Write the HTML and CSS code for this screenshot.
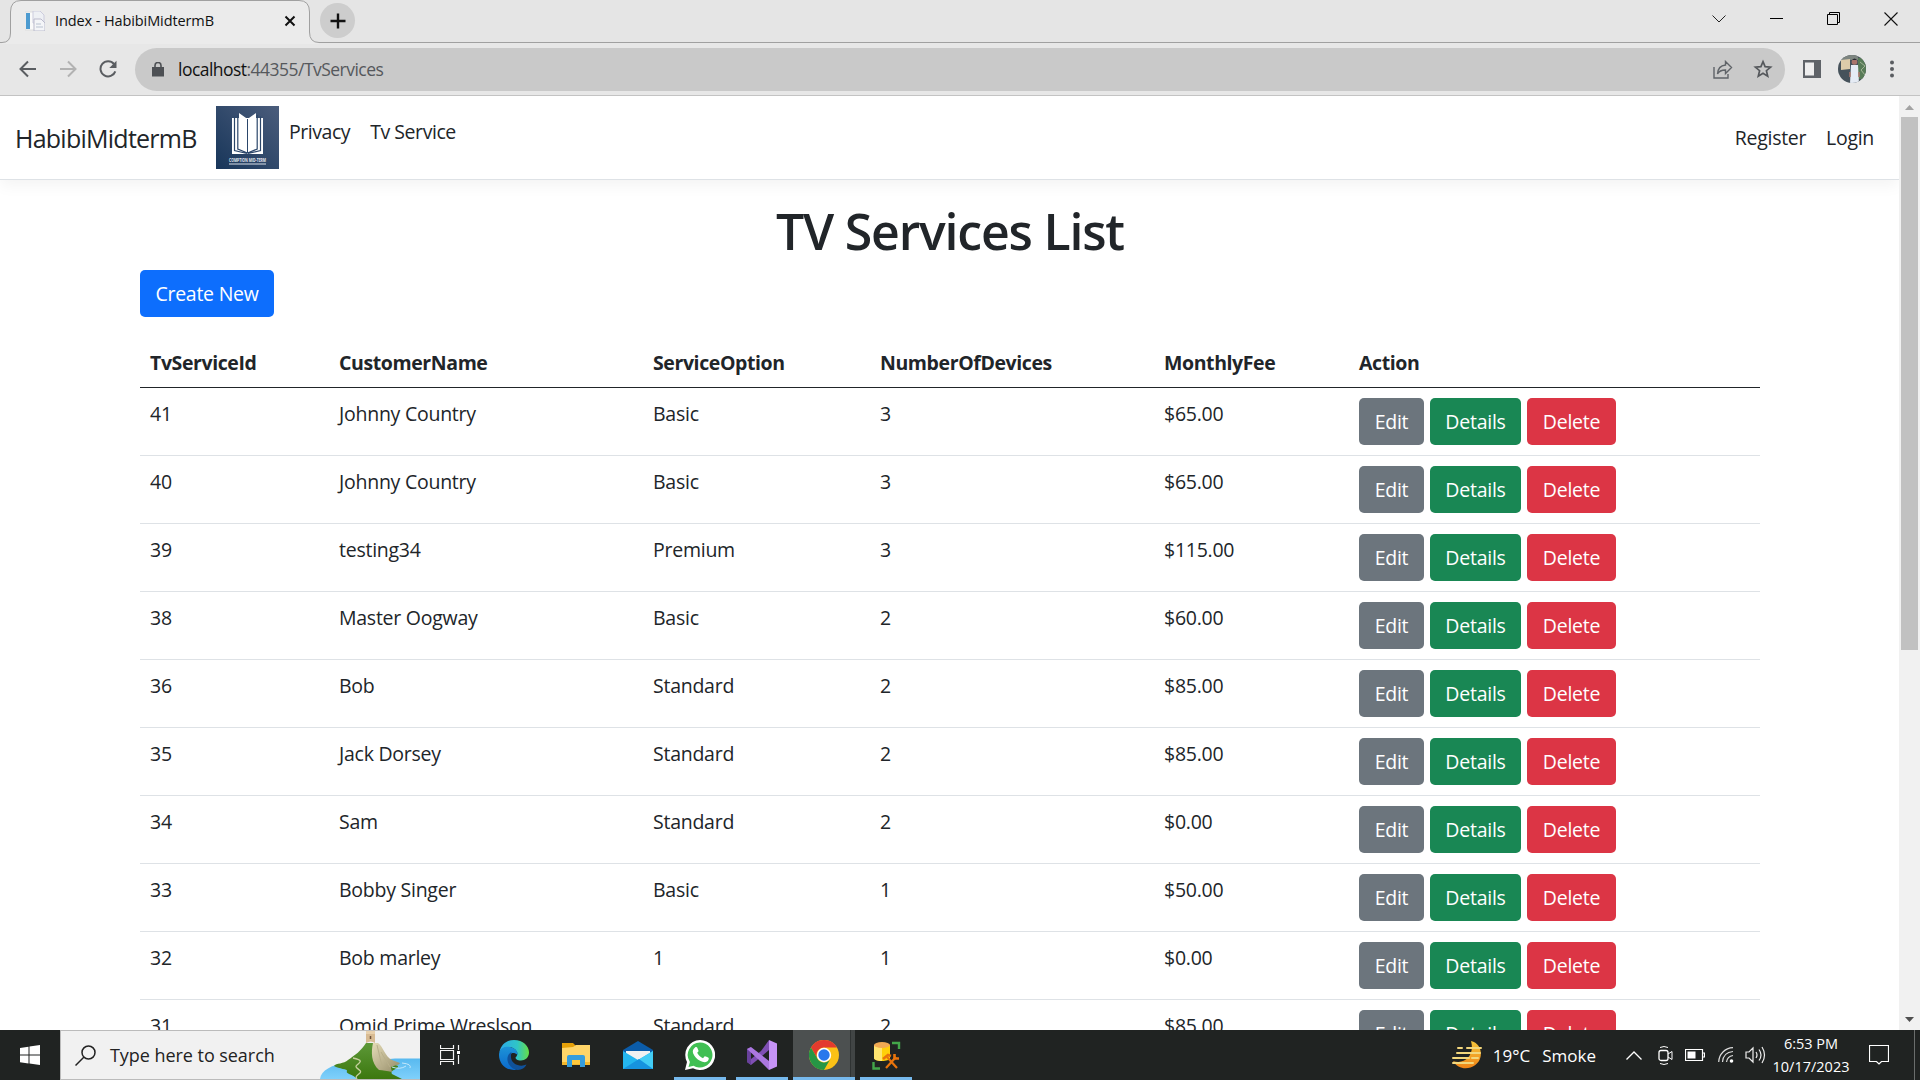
FILE: index.html
```html
<!DOCTYPE html>
<html lang="en">
<head>
<meta charset="utf-8">
<title>Index - HabibiMidtermB</title>
<link rel="stylesheet" href="styles.css">
</head>
<body>
<header class="browser">
  <div class="tabstrip">
    <svg class="tab-shape" width="1920" height="44"><path d="M0 42.5H2Q10.500 42.500 10.500 33V12Q10.500 .5 21 .5H299Q309.500 .5 309.500 12V32Q309.500 42.500 319 42.500H1920V44H0Z" fill="#e7e7e7"/><path d="M10.500 33V12Q10.500 .5 21 .5H299Q309.500 .5 309.500 12V32Q309.500 42.500 319 42.500V44H2V42.500Q10.500 42.500 10.500 33Z" fill="#ebebeb"/><path d="M0 42.500H2Q10.500 42.500 10.500 33V12Q10.500 .5 21 .5H299Q309.500 .5 309.500 12V32Q309.500 42.500 319 42.500H1920" fill="none" stroke="#a0a0a0"/></svg>
    <div class="tab">
      <svg width="20" height="20" viewBox="0 0 20 20"><path d="M0 1h13v18H0z" fill="#fafafa" stroke="#ddd"/><path d="M1 2h4v16H1z" fill="#4d9bd0"/><path d="M8 0h7l4 4v8H8z" fill="#eef0f4" stroke="#ccd"/><path d="M9 8h7l4 4v8H9z" fill="#f4f5f8" stroke="#bbc"/><path d="M11 13h5M11 16h7" stroke="#b9c2d0"/></svg>
      <span class="tab-title">Index - HabibiMidtermB</span>
      <svg class="tab-close" width="12" height="12" viewBox="0 0 12 12"><path d="M1.500 1.500l9 9M10.500 1.500l-9 9" stroke="#111" stroke-width="2"/></svg>
    </div>
    <div class="new-tab"><svg width="16" height="16" viewBox="0 0 16 16"><path d="M8 .5v15M.5 8h15" stroke="#111" stroke-width="2.400"/></svg></div>
    <div class="window-buttons">
      <svg width="14" height="14" viewBox="0 0 14 14"><path d="M.5 3.500L7 10l6.500-6.500" fill="none" stroke="#222"/></svg>
      <svg width="13" height="13" viewBox="0 0 13 13"><path d="M0 6.500h13" stroke="#000"/></svg>
      <svg width="13" height="13" viewBox="0 0 13 13"><path d="M.5 2.500h10v10H.5zM2.500 2.500v-2h10v10h-2" fill="none" stroke="#000"/></svg>
      <svg width="14" height="14" viewBox="0 0 14 14"><path d="M.5 .5l13 13M13.500 .5l-13 13" stroke="#111" stroke-width="1.100"/></svg>
    </div>
  </div>
  <div class="toolbar">
    <div class="nav-icons">
      <svg width="18" height="18" viewBox="0 0 18 18"><path d="M17 9H2M9 1.500L1.500 9 9 16.500" fill="none" stroke="#5a5d61" stroke-width="2"/></svg>
      <svg width="18" height="18" viewBox="0 0 18 18"><path d="M1 9h15M9 1.500L16.500 9 9 16.500" fill="none" stroke="#b2b2b2" stroke-width="2"/></svg>
      <svg width="18" height="18" viewBox="0 0 18 18"><path d="M15 4A7.600 7.600 0 1 0 16.300 11.300" fill="none" stroke="#5a5d61" stroke-width="2"/><path d="M17.500 .8V8h-7.200z" fill="#5a5d61"/></svg>
    </div>
    <div class="omnibox">
      <svg width="12" height="15" viewBox="0 0 12 15"><path d="M0 5h12v9.500H0z" fill="#4d5054"/><path d="M3 6V3.500a3 3 0 0 1 6 0V6" fill="none" stroke="#4d5054" stroke-width="1.600"/></svg>
      <span class="url"><b>localhost</b>:44355/TvServices</span>
      <svg class="share" width="20" height="19" viewBox="0 0 20 19"><path d="M1 7v11h14v-4" fill="none" stroke="#5f6368" stroke-width="1.400"/><path d="M12.500 1.500l6 6-6 6v-3.500c-4 0-6.500 1-8 4 .3-5 3-8.500 8-9z" fill="none" stroke="#5f6368" stroke-width="1.400"/></svg>
      <svg width="20" height="20" viewBox="0 0 20 20"><path d="M10 2.600l2.100 5 5.500.5-4.200 3.600 1.300 5.400L10 14.200l-4.700 2.900 1.300-5.400-4.200-3.600 5.500-.5z" fill="none" stroke="#55585c" stroke-width="1.700"/></svg>
    </div>
    <div class="tools">
      <svg width="18" height="18" viewBox="0 0 18 18"><path d="M0 0h18v18H0z" fill="#5f6368"/><path d="M2 2.500h9v13H2z" fill="#eee"/></svg>
      <svg class="avatar" width="28" height="28" viewBox="0 0 28 28"><defs><clipPath id="round"><circle cx="14" cy="14" r="14"/></clipPath></defs><g clip-path="url(#round)"><path d="M0 0h28v28H0z" fill="#46525b"/><path d="M0 0h20v5H0z" fill="#7d8580"/><path d="M3 5l9-1v10l-9 1z" fill="#dccbaa"/><path d="M20 3h8v21h-8z" fill="#587b57"/><path d="M22 7l5 4-4 4 4 5" stroke="#a1b494" fill="none"/><path d="M13 10h7l1 18h-9z" fill="#e5ebf4"/><circle cx="16.500" cy="7" r="2.800" fill="#a9746b"/><path d="M14 5q2.500-3 5 0z" fill="#282a30"/><path d="M12 17v5M21 17v5" stroke="#ae796e" stroke-width="1.500"/></g></svg>
      <svg width="4" height="18" viewBox="0 0 4 18"><g fill="#5a5d61"><circle cx="2" cy="2.500" r="2"/><circle cx="2" cy="9" r="2"/><circle cx="2" cy="15.500" r="2"/></g></svg>
    </div>
  </div>
</header>

<div class="viewport">
  <div class="page">
    <nav class="navbar">
      <a class="brand">HabibiMidtermB</a>
      <svg class="logo" width="63" height="63" viewBox="0 0 63 63"><defs><linearGradient id="navy" x1="0" y1="1" x2="1" y2="0"><stop offset="0" stop-color="#18365a"/><stop offset="1" stop-color="#4b5d7c"/></linearGradient></defs><path d="M0 0h63v63H0z" fill="url(#navy)"/><path d="M16 12h15.500v36H16zM31.500 12H47v36H31.500z" fill="#fff"/><path d="M18.500 10.500v34l12.500 3M44.500 10.500v34l-12.500 3M21.800 9v34l9.700 4M41.200 9v34l-9.700 4" fill="none" stroke="#2b466a" stroke-width="1.200"/><path d="M23 7l8.500 6v33L23 42zM40 7l-8.500 6v33l8.500-4z" fill="#fff"/><path d="M31.500 13v34" stroke="#2b466a"/><path d="M13 58h37" stroke="#dce2ea"/><text x="13" y="55.500" textLength="37" lengthAdjust="spacingAndGlyphs" class="logo-text">COMPTION MID-TERM</text></svg>
      <div class="links"><a>Privacy</a><a>Tv Service</a></div>
      <div class="account"><a>Register</a><a>Login</a></div>
    </nav>
    <main class="container">
      <h1>TV Services List</h1>
      <a class="btn primary">Create New</a>
      <table>
        <colgroup><col class="c1"><col class="c2"><col class="c3"><col class="c4"><col class="c5"><col></colgroup>
        <thead><tr><th>TvServiceId</th><th>CustomerName</th><th>ServiceOption</th><th>NumberOfDevices</th><th>MonthlyFee</th><th>Action</th></tr></thead>
        <tbody>
          <tr><td>41</td><td>Johnny Country</td><td>Basic</td><td>3</td><td>$65.00</td><td><div class="actions"><a class="btn edit">Edit</a><a class="btn details">Details</a><a class="btn delete">Delete</a></div></td></tr>
          <tr><td>40</td><td>Johnny Country</td><td>Basic</td><td>3</td><td>$65.00</td><td><div class="actions"><a class="btn edit">Edit</a><a class="btn details">Details</a><a class="btn delete">Delete</a></div></td></tr>
          <tr><td>39</td><td>testing34</td><td>Premium</td><td>3</td><td>$115.00</td><td><div class="actions"><a class="btn edit">Edit</a><a class="btn details">Details</a><a class="btn delete">Delete</a></div></td></tr>
          <tr><td>38</td><td>Master Oogway</td><td>Basic</td><td>2</td><td>$60.00</td><td><div class="actions"><a class="btn edit">Edit</a><a class="btn details">Details</a><a class="btn delete">Delete</a></div></td></tr>
          <tr><td>36</td><td>Bob</td><td>Standard</td><td>2</td><td>$85.00</td><td><div class="actions"><a class="btn edit">Edit</a><a class="btn details">Details</a><a class="btn delete">Delete</a></div></td></tr>
          <tr><td>35</td><td>Jack Dorsey</td><td>Standard</td><td>2</td><td>$85.00</td><td><div class="actions"><a class="btn edit">Edit</a><a class="btn details">Details</a><a class="btn delete">Delete</a></div></td></tr>
          <tr><td>34</td><td>Sam</td><td>Standard</td><td>2</td><td>$0.00</td><td><div class="actions"><a class="btn edit">Edit</a><a class="btn details">Details</a><a class="btn delete">Delete</a></div></td></tr>
          <tr><td>33</td><td>Bobby Singer</td><td>Basic</td><td>1</td><td>$50.00</td><td><div class="actions"><a class="btn edit">Edit</a><a class="btn details">Details</a><a class="btn delete">Delete</a></div></td></tr>
          <tr><td>32</td><td>Bob marley</td><td>1</td><td>1</td><td>$0.00</td><td><div class="actions"><a class="btn edit">Edit</a><a class="btn details">Details</a><a class="btn delete">Delete</a></div></td></tr>
          <tr><td>31</td><td>Omid Prime Wreslson</td><td>Standard</td><td>2</td><td>$85.00</td><td><div class="actions"><a class="btn edit">Edit</a><a class="btn details">Details</a><a class="btn delete">Delete</a></div></td></tr>
        </tbody>
      </table>
    </main>
  </div>
  <div class="scrollbar">
    <svg width="21" height="21"><path d="M6 14h9l-4.500-5z" fill="#a3a3a3"/></svg>
    <div class="thumb"></div>
    <svg width="21" height="21"><path d="M6 8h9l-4.500 5z" fill="#505050"/></svg>
  </div>
</div>

<footer class="taskbar">
  <div class="start"><svg width="20" height="20" viewBox="0 0 20 20"><path d="M0 3l8.500-1.300V9.500H0zM9.500 1.500L20 0v9.500H9.500zM0 10.500h8.500v8L0 17.200zM9.500 10.500H20V20L9.500 18.600z" fill="#fff"/></svg></div>
  <div class="search">
    <svg width="21" height="21" viewBox="0 0 21 21"><circle cx="13.500" cy="7.500" r="6.500" fill="none" stroke="#222" stroke-width="1.500"/><path d="M9 12l-8.500 8.500" stroke="#222" stroke-width="1.500"/></svg>
    <span>Type here to search</span>
    <svg class="island" width="100" height="48" viewBox="0 0 100 48"><defs><linearGradient id="sea" x1="0" y1="0" x2="0" y2="1"><stop offset="0" stop-color="#58b9ef"/><stop offset="1" stop-color="#7fd0fb"/></linearGradient><linearGradient id="grass" x1="0" y1="0" x2="0" y2="1"><stop offset="0" stop-color="#5d9838"/><stop offset="1" stop-color="#3c780f"/></linearGradient><linearGradient id="rock" x1="0" y1="0" x2="1" y2="1"><stop offset="0" stop-color="#e5dcb7"/><stop offset="1" stop-color="#948b68"/></linearGradient></defs><path d="M0 48C1 39 12 34 25 32l50-4.500h25V48z" fill="url(#sea)"/><path d="M14 35c2-3 10-2 14-6 7-5 13-9 18-17h7c6 6 9 17 17 20l8 3c1 3-9 4-6 8l10 5H37c-4-5-12-5-10-8 1-2-8-2-13-5z" fill="url(#grass)"/><path d="M53 12h5c5 3 7 14 14 17l8 3c-1 3-9 2-9 5l1 4c-5-1-9-2-13-2-8-7-8-18-6-27z" fill="url(#rock)"/><path d="M57 14l5 21M61 21l9 15" stroke="#b8af8a" fill="none"/><path d="M46 0h9v12q-4-3-9 0z" fill="#d8bb93"/><path d="M46 0h9v3h-9z" fill="#e9d1ad"/><path d="M50.500 5v3" stroke="#6d513b" stroke-width="1.500"/><path d="M33 27c10 2 8 4 4 7s6 5 3 8-5 3-3 6" fill="none" stroke="#c5cf9d" stroke-width="1.300"/><path d="M72 36q8 3 14-1M82 32q10 1 8 5" fill="none" stroke="#c1e7fb"/></svg>
  </div>
  <div class="apps">
    <div class="app"><svg width="20" height="20" viewBox="0 0 20 20"><path d="M.5 0v3.500h13V0M.5 20v-3.500h13V20M.5 5.500h13v9H.5zM18.500 0v5M18.500 10v9" fill="none" stroke="#f5f5f5" stroke-width="1.200"/><path d="M17 6h3v3h-3z" fill="#fff"/></svg></div>
    <div class="app"><svg width="30" height="30" viewBox="0 0 30 30"><defs><linearGradient id="e1" x1="0" y1=".5" x2="1" y2=".5"><stop offset="0" stop-color="#2ba9e8"/><stop offset=".6" stop-color="#2fc5c7"/><stop offset="1" stop-color="#66df46"/></linearGradient><linearGradient id="e2" x1="0" y1="0" x2="0" y2="1"><stop offset="0" stop-color="#1d93d7"/><stop offset="1" stop-color="#0b69cc"/></linearGradient></defs><path d="M.5 12C2 4 8 0 15 0c9 0 15 6 15 12.500 0 5-4 8-8 8-4 0-5.500-1.500-5.500-3 1-1 2.500-3 1.500-5.500C15 6 5 5 .5 12z" fill="url(#e1)"/><path d="M0 15C0 8 6 6 11 7c5 1 8 4 7.500 8-5-5-10.500 0-8.500 6 1 4 5 8 8 9h-3C6 30 0 23 0 15z" fill="url(#e2)"/><path d="M12.500 12c-7 4-4.500 14 3.500 17.500 5 1.500 9.500-1 11.500-5-6 3-15 0-15.500-7 0-2 0-4 .5-5.500z" fill="#10529b"/></svg></div>
    <div class="app"><svg width="28" height="24" viewBox="0 0 28 24"><path d="M0 0h11l3 3v4H0z" fill="#e5a008"/><path d="M0 5l11-1 3-2h14v20H0z" fill="#ffd568"/><path d="M0 19h28v3H0z" fill="#f3b82d"/><path d="M5 24V14q0-2 2-2h14q2 0 2 2v10h-5v-6h-8v6z" fill="#359ddd"/><path d="M10 17h8v4h-8z" fill="#ffc83d"/></svg></div>
    <div class="app"><svg width="30" height="28" viewBox="0 0 30 28"><path d="M0 9L15 0l15 9v5H0z" fill="#0b5ca9"/><path d="M3 10h24v5l-12 7L3 15z" fill="#f1f1f1"/><path d="M0 10l15 9 15-9v18H0z" fill="#24b6ef"/><path d="M30 10v18L15 19z" fill="#42cdf5"/><path d="M0 28l16-10 14 10z" fill="#1693df"/></svg></div>
    <div class="app open"><svg width="30" height="30" viewBox="0 0 30 30"><path d="M15 0A15 15 0 1 1 8 28.200L0 30l2-8A15 15 0 0 1 15 0z" fill="#fff"/><path d="M15 2.500A12.500 12.500 0 1 1 8.500 25.700L3.500 27l1.400-5A12.500 12.500 0 0 1 15 2.500z" fill="#40bf53"/><path d="M10 7.500c1-.8 2-.4 2.300.3l1.200 3c.2.800-1.300 2-1.300 2 1.300 2.700 3.200 4.300 5.800 5.400l1.700-1.900c.5-.4 3.700 1.300 4 1.600.3 1-.6 3-1.700 3.700-2 1.200-4.600.4-7-.8-3-1.600-5.500-4.400-6.800-7.300-1-2.300 0-4.700 1.800-6z" fill="#fff"/></svg></div>
    <div class="app open"><svg width="30" height="30" viewBox="0 0 30 30"><path d="M22 0v10L9 21l-5 4-4-3 4-3L14 11z" fill="#7f4fb4"/><path d="M0 9l4-2v18l-4-3z" fill="#68419b"/><path d="M0 9l4-2 18 14v9L13 21z" fill="#ab77e0"/><path d="M22 0l8 3.500v23L22 30z" fill="#c693f7"/></svg></div>
    <div class="app open active"><svg width="30" height="30" viewBox="0 0 30 30"><circle cx="15" cy="15" r="15" fill="#fbc116"/><path d="M2 7.500A15 15 0 0 1 28 7.500H15A7.500 7.500 0 0 0 8.500 18.700z" fill="#e33b2e"/><path d="M2 7.500l6.500 11.200A7.500 7.500 0 0 0 21.500 18.700L15 30A15 15 0 0 1 2 7.500z" fill="#269645"/><circle cx="15" cy="15" r="7.200" fill="#fff"/><circle cx="15" cy="15" r="5.700" fill="#2878ec"/></svg></div>
    <div class="app open"><svg width="29" height="29" viewBox="0 0 29 29"><path d="M2 4v13c0 4 16 4 16 0V4z" fill="#ffcf0a"/><path d="M2 4v13c0 2 4 3 8 3V4z" fill="#ffe470"/><ellipse cx="10" cy="4" rx="8" ry="3" fill="#f1a953"/><path d="M20 2h7v6M1.500 21v6.500H8" fill="none" stroke="#43a64a" stroke-width="2.400"/><path d="M15 16l10 11M14 27l10-11" fill="none" stroke="#e8730c" stroke-width="2.200"/><path d="M11 18l5-4 3 1M22.500 13v4.500H27" fill="none" stroke="#e8730c" stroke-width="2.600"/></svg></div>
  </div>
  <div class="tray">
    <svg class="weather" width="31" height="29" viewBox="0 0 31 29"><defs><linearGradient id="moon" x1="0" y1="0" x2="0" y2="1"><stop offset="0" stop-color="#f5c53a"/><stop offset="1" stop-color="#f08417"/></linearGradient></defs><path d="M19 0c8 2 11 9 9.500 16C26 28 8 32 1 20c12 4 22-6 18-20z" fill="url(#moon)"/><path d="M6 7h4M15 7h14M5 12h23M1 17h16M20 17h6M1 22h20" stroke="#f3d77c" stroke-width="2" stroke-linecap="round"/></svg>
    <span class="temp">19°C</span><span class="smoke">Smoke</span>
    <svg class="chev" width="16" height="9" viewBox="0 0 16 9"><path d="M.5 8.500L8 1l7.500 7.500" fill="none" stroke="#fff" stroke-width="1.300"/></svg>
    <svg class="cam" width="15" height="19" viewBox="0 0 15 19"><rect x="1" y="4.500" width="9" height="10" rx="2" fill="none" stroke="#fff" stroke-width="1.300"/><path d="M10 8l4-2.500v8L10 11M2 1.500q4-2 8 0M2 17.500q4 2 8 0" fill="none" stroke="#fff"/></svg>
    <svg class="bat" width="20" height="12" viewBox="0 0 20 12"><path d="M.5 .5h17v11H.5zM18 4h1.500v4H18" fill="none" stroke="#fff" stroke-width="1.200"/><path d="M2.500 2.500h8v7h-8z" fill="#fff"/></svg>
    <svg class="wifi" width="16" height="16" viewBox="0 0 16 16"><path d="M.7 15C1 7 7 1 15 .7M4.500 15C5 9 9 5 15 4.500M8.500 15c.5-4 3-6 6.500-6.500" fill="none" stroke="#ddd" stroke-width="1.200"/><circle cx="13.500" cy="14" r="1.800" fill="#fff"/></svg>
    <svg class="vol" width="21" height="18" viewBox="0 0 21 18"><path d="M1 6h3l4-4v14l-4-4H1zM11 6q2 3 0 6M14 3.500q4 5.500 0 11M17 1q5 8 0 16" fill="none" stroke="#eee" stroke-width="1.200"/></svg>
    <div class="clock"><span>6:53 PM</span><span>10/17/2023</span></div>
    <svg class="note" width="20" height="20" viewBox="0 0 20 20"><path d="M.5 .5h19v16h-7L10 19l-2.500-2.500h-7z" fill="none" stroke="#fff" stroke-width="1.200"/></svg>
    <div class="peek"></div>
  </div>
</footer>
</body>
</html>
```
FILE: styles.css
```css
* { box-sizing: border-box; }
body {
  margin: 0;
  width: 1920px;
  height: 1080px;
  overflow: hidden;
  display: flex;
  flex-direction: column;
  font-family: "Open Sans", "Noto Sans", sans-serif;
  font-size: 19.5px;
  letter-spacing: -.25px;
  color: #212529;
  background: #fff;
}
svg { display: block; flex: none; }
span, a { white-space: nowrap; }

.browser { height: 96px; background: #e7e7e7; border-bottom: 1px solid #c3c3c3; }
.tabstrip { height: 43px; display: flex; position: relative; background: #e5e5e5; }
.tab-shape { position: absolute; left: 0; top: 0; }
.tab { position: relative; width: 310px; height: 42px; padding-left: 25px; display: flex; align-items: center; }
.tab-title { margin: -1px 0 0 10px; font-size: 14.5px; letter-spacing: -.1px; color: #111; }
.tab-close { margin-left: auto; margin-right: 14px; }
.new-tab { position: relative; margin: 3px 0 0 10px; width: 35px; height: 35px; border-radius: 50%; background: #cdcdcd; display: flex; align-items: center; justify-content: center; }
.window-buttons { position: relative; margin-left: auto; height: 37px; padding-right: 22px; display: flex; align-items: center; gap: 44px; }
.toolbar { height: 52px; display: flex; align-items: center; }
.nav-icons { width: 135px; padding-left: 19px; display: flex; gap: 22px; }
.omnibox { width: 1650px; height: 43px; border-radius: 22px; background: #c9c9c9; padding: 0 12px 0 17px; display: flex; align-items: center; }
.url { margin-left: 14px; font-size: 17.5px; letter-spacing: -.53px; color: #55585c; }
.url b { font-weight: 400; color: #111; }
.share { margin-left: auto; margin-right: 20px; }
.tools { display: flex; align-items: center; padding-left: 18px; }
.avatar { margin: 0 24px 0 17px; }

.viewport { height: 934px; display: flex; overflow: hidden; }
.page { flex: 1; overflow: hidden; }
.navbar { height: 84px; padding: 10px 25px 10px 15px; display: flex; align-items: center; border-bottom: 1px solid #dee2e6; box-shadow: 0 5px 15px rgba(0, 0, 0, .05); }
.brand { width: 201px; padding-top: 1px; font-size: 25px; letter-spacing: -.75px; }
.logo-text { font-size: 5px; font-weight: 700; letter-spacing: 0; fill: #e6ebf2; }
.links { display: flex; gap: 20px; padding-left: 10px; margin-bottom: 12px; letter-spacing: -.45px; }
.account { display: flex; gap: 20px; margin-left: auto; letter-spacing: -.3px; }
.container { width: 1620px; margin: 0 auto 0 140px; padding-top: 21px; }
h1 { margin: 0 0 9px; font-size: 50px; line-height: 60px; font-weight: 600; letter-spacing: -1.2px; text-align: center; }
.btn { display: flex; align-items: center; justify-content: center; height: 47px; border-radius: 5px; color: #fff; }
.primary { width: 134px; background: #0d6efd; }
.edit { width: 65px; background: #6c757d; }
.details { width: 91px; background: #198754; }
.delete { width: 89px; background: #dc3545; }
.actions { display: flex; gap: 6px; }
table { width: 1620px; margin-top: 21px; table-layout: fixed; border-collapse: separate; border-spacing: 0; }
.c1 { width: 189px; }
.c2 { width: 314px; }
.c3 { width: 227px; }
.c4 { width: 284px; }
.c5 { width: 195px; }
th, td { padding: 11px 10px 9px; line-height: 30px; text-align: left; vertical-align: top; border-bottom: 1px solid #dee2e6; white-space: nowrap; }
th { height: 50px; padding: 10px 10px 9px; border-color: #212529; font-weight: 700; letter-spacing: -.4px; }
td { height: 68px; }
td:last-child { padding-top: 10px; }

.scrollbar { width: 21px; background: #f1f1f1; display: flex; flex-direction: column; }
.thumb { width: 17px; height: 533px; margin: 0 auto auto 2px; background: #c1c1c1; }

.taskbar { height: 50px; display: flex; align-items: center; background: #202322; color: #fff; letter-spacing: 0; }
.start { width: 60px; display: flex; justify-content: center; }
.search { width: 360px; height: 50px; padding-left: 14px; display: flex; align-items: center; background: #f1f1f1; border: 1px solid #bbb; border-right: 0; color: #222; font-size: 18px; letter-spacing: -.05px; }
.search span { margin-left: 14px; }
.island { margin-left: auto; }
.apps { display: flex; height: 50px; }
.app { width: 62px; height: 50px; display: flex; align-items: center; justify-content: center; border: solid transparent; border-width: 0 5px; background-clip: padding-box; }
.app:first-child { padding-right: 2px; margin-right: 1px; }
.open { box-shadow: inset 0 -3px #76b9ed; margin: 0 5px; border-width: 0; width: 52px; }
.active { width: 62px; margin: 0; background: linear-gradient(90deg, #4c5050 57px, #2f3333 57px 58px, #414545 58px); }
.tray { margin-left: auto; height: 50px; display: flex; align-items: center; font-size: 17px; }
.temp { margin-left: 10px; }
.smoke { margin-left: 12px; }
.chev { margin-left: 30px; }
.cam { margin-left: 16px; }
.bat { margin-left: 12px; }
.wifi { margin-left: 13px; }
.vol { margin-left: 11px; }
.clock { width: 90px; display: flex; flex-direction: column; align-items: center; font-size: 14.5px; line-height: 23px; }
.note { margin: 0 25px 0 13px; }
.peek { width: 6px; height: 50px; border-left: 1px solid #6a6d6c; }
```
